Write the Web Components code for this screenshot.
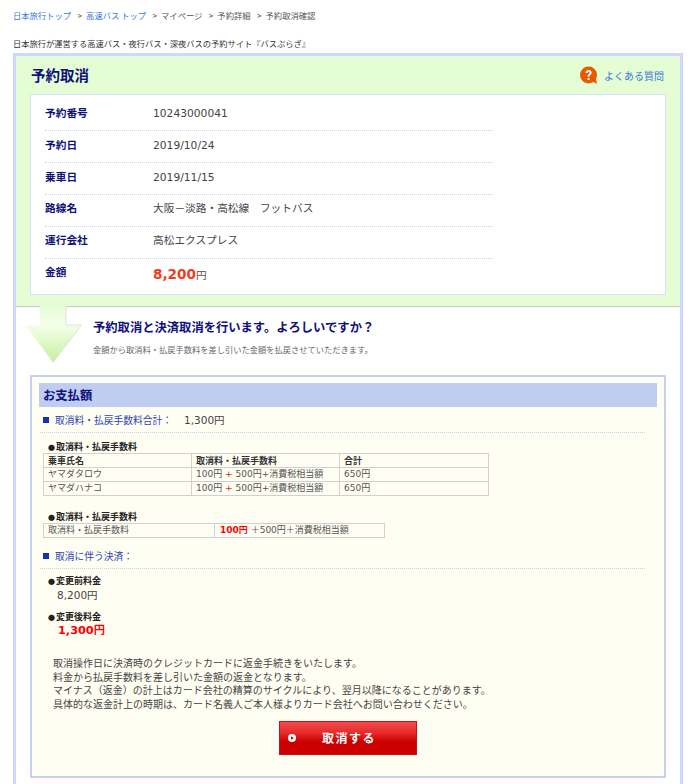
<!DOCTYPE html>
<html lang="ja">
<head>
<meta charset="utf-8">
<title>予約取消</title>
<style>
  html, body { margin: 0; padding: 0; background: #fff; }
  body { width: 700px; height: 784px; overflow: hidden; font-family: "Noto Sans CJK JP", "Liberation Sans", sans-serif; color: #444; }
</style>
</head>
<body>
<crumb-nav>
  <a slot="items">日本旅行トップ</a>
  <a slot="items">高速バス トップ</a>
  <span slot="items">マイページ</span>
  <span slot="items">予約詳細</span>
  <span slot="items">予約取消確認</span>
</crumb-nav>
<site-tagline>日本旅行が運営する高速バス・夜行バス・深夜バスの予約サイト『バスぶらざ』</site-tagline>
<site-frame>
  <summary-panel heading="予約取消">
    <info-row label="予約番号">10243000041</info-row>
    <info-row label="予約日">2019/10/24</info-row>
    <info-row label="乗車日">2019/11/15</info-row>
    <info-row label="路線名" tight>大阪－淡路・高松線　フットバス</info-row>
    <info-row label="運行会社" tight>高松エクスプレス</info-row>
    <info-row label="金額" last tight><price-tag>8,200</price-tag></info-row>
  </summary-panel>
  <cancel-notice heading="予約取消と決済取消を行います。よろしいですか？">金額から取消料・払戻手数料を差し引いた金額を払戻させていただきます。</cancel-notice>
  <refund-box heading="お支払額">
    <sum-line label="取消料・払戻手数料合計：" amount="1,300円"></sum-line>
    <fee-tables></fee-tables>
    <sum-line label="取消に伴う決済：" class="second"></sum-line>
    <fare-item label="変更前料金" amount="8,200円"></fare-item>
    <fare-item label="変更後料金" amount="1,300円" strong></fare-item>
    <refund-note>
      取消操作日に決済時のクレジットカードに返金手続きをいたします。<br>
      料金から払戻手数料を差し引いた金額の返金となります。<br>
      マイナス（返金）の計上はカード会社の精算のサイクルにより、翌月以降になることがあります。<br>
      具体的な返金計上の時期は、カード名義人ご本人様よりカード会社へお問い合わせください。
    </refund-note>
    <cancel-button>取消する</cancel-button>
  </refund-box>
</site-frame>

<script>
(function () {
  const FONT = '"Noto Sans CJK JP", "Liberation Sans", sans-serif';
  const NUM = '"DejaVu Sans", "Noto Sans CJK JP", sans-serif';
  const NAVY = '#10107a';
  const DOT = '<span class="dot">●</span>';
  const DOT_CSS = '.dot { display: inline-block; width: 8px; font-size: 7px; }';

  // small helper: each element gets its markup from a function of itself
  function define(name, render) {
    customElements.define(name, class extends HTMLElement {
      connectedCallback() {
        if (this.shadowRoot) return;
        this.attachShadow({ mode: 'open' }).innerHTML = render(this);
      }
    });
  }
  const attr = (el, key) => el.getAttribute(key) || '';

  define('crumb-nav', () => `
    <style>
      :host { display: block; padding: 8px 0 0 13px; height: 21px; font-size: 8.300px; line-height: 14px; color: #555; }
      .row { display: flex; }
      ::slotted(a) { color: #3a78d8; }
      ::slotted(*) { margin-right: 15px; position: relative; white-space: nowrap; }
      ::slotted(*:not(:last-child))::after { content: ">"; position: absolute; right: -11px; top: 0; color: #555; }
    </style>
    <div class="row"><slot name="items"></slot></div>
  `);

  define('site-tagline', () => `
    <style>
      :host { display: block; padding: 7px 0 3px 13px; height: 14px; font-size: 8.250px; line-height: 14px; color: #333; white-space: nowrap; }
    </style>
    <slot></slot>
  `);

  define('site-frame', () => `
    <style>
      :host { display: block; margin-left: 13px; width: 664px; height: 728px; border: 3px solid #cdd7ff; border-bottom: 0; overflow: hidden; }
    </style>
    <slot></slot>
  `);

  define('summary-panel', (el) => `
    <style>
      :host { display: block; height: 250px; background: #e5fdd5; box-sizing: border-box; padding: 0 14px; box-shadow: 0 1px 1px #ccc; position: relative; }
      .head { display: flex; justify-content: space-between; align-items: center; height: 38px; padding-right: 2px; }
      h1 { margin: 0 0 1px 1px; font-size: 14.500px; line-height: 20px; font-weight: 700; color: ${NAVY}; }
      .faq { display: flex; align-items: center; gap: 6px; font-size: 10px; color: #3a78d8; }
      svg { display: block; }
      .card { height: 201px; box-sizing: border-box; background: #fff; border: 1px solid #d5e2f7; padding: 4px 14px 0; }
    </style>
    <div class="head">
      <h1>${attr(el, 'heading')}</h1>
      <div class="faq">
        <svg width="18" height="19" viewBox="0 0 18 19">
          <path d="M12 15l5 3-1-5z" fill="#e85a00"/>
          <circle cx="8.5" cy="9" r="8.5" fill="#e85a00"/>
          <path d="M5.6 7c0-2 1.3-3 3-3s3 1 3 2.7c0 2.200-2.200 2.200-2.200 4H7.600c0-2.800 2-2.800 2-4 0-.6-.4-1-1-1s-1 .4-1 1.300z" fill="#fff"/>
          <rect x="7.600" y="12" width="1.900" height="2" fill="#fff"/>
        </svg>
        <span>よくある質問</span>
      </div>
    </div>
    <div class="card"><slot></slot></div>
  `);

  define('info-row', (el) => {
    const tight = el.hasAttribute('tight') ? 1 : 0;
    return `
    <style>
      :host { display: flex; align-items: center; width: 448px; height: 32px; box-sizing: border-box; border-bottom: ${el.hasAttribute('last') ? '0' : '1px dotted #c5cff0'}; font-size: 10.700px; }
      b { width: 108px; flex: none; font-size: 10.700px; line-height: 14px; color: ${NAVY}; font-weight: 700; position: relative; top: ${-2 - tight}px; }
      span { color: #444; font-family: ${NUM}; line-height: 14px; position: relative; top: ${-1 - tight}px; white-space: nowrap; }
    </style>
    <b>${attr(el, 'label')}</b><span><slot></slot></span>
  `;
  });

  define('price-tag', () => `
    <style>
      :host { display: inline-block; position: relative; top: 1px; }
      b { font: 700 13.600px "DejaVu Sans", sans-serif; color: #ee3d1c; }
      span { font-size: 10.700px; color: #555; font-family: ${FONT}; }
    </style>
    <b><slot></slot></b><span>円</span>
  `);

  define('cancel-notice', (el) => `
    <style>
      :host { display: block; height: 69px; box-sizing: border-box; padding: 11px 0 0 77px; position: relative; }
      h2 { margin: 0; font-size: 12.300px; line-height: 20px; font-weight: 700; color: ${NAVY}; white-space: nowrap; }
      p { margin: 5px 0 0; font-size: 8.250px; line-height: 14px; color: #666; white-space: nowrap; }
      svg { position: absolute; left: 9px; top: 0; display: block; }
    </style>
    <svg width="58" height="58" viewBox="0 0 58 58">
      <defs>
        <linearGradient id="arr" x1="0" y1="0" x2="0" y2="1">
          <stop offset="0" stop-color="#e5fdd5"/>
          <stop offset=".35" stop-color="#f4fee9"/>
          <stop offset="1" stop-color="#c6f19f"/>
        </linearGradient>
      </defs>
      <path d="M15 0h26v19h15.500L28 56.500 .5 19H15z" fill="url(#arr)"/>
      <path d="M41 0v19h15.500L28 56.500" fill="none" stroke="#dfe3dc" stroke-width="1"/>
    </svg>
    <h2>${attr(el, 'heading')}</h2>
    <p><slot></slot></p>
  `);

  define('refund-box', (el) => `
    <style>
      :host { display: block; margin-left: 14px; width: 636px; height: 403px; box-sizing: border-box; background: #fffef3; border: 2px solid #c5d0f0; padding: 6px 7px 0; }
      h3 { margin: 0; height: 24px; padding-left: 4px; background: #bfcdf0; font-size: 12.300px; line-height: 24px; font-weight: 700; color: ${NAVY}; }
    </style>
    <h3>${attr(el, 'heading')}</h3>
    <slot></slot>
  `);

  define('sum-line', (el) => `
    <style>
      :host { display: flex; align-items: center; width: 605px; margin-left: 1px; height: 26px; box-sizing: border-box; border-bottom: 1px dotted #c5cff0; padding-left: 3px; font-size: 9.750px; color: #2c44b8; }
      :host(.second) { margin-top: 5px; }
      i { width: 6px; height: 6px; background: #1234b0; margin-right: 6px; flex: none; }
      span { margin-left: 12px; font-size: 10.500px; color: #444; font-family: ${NUM}; }
    </style>
    <i></i>${attr(el, 'label')}${attr(el, 'amount') ? `<span>${attr(el, 'amount')}</span>` : ''}
  `);

  define('fee-tables', () => `
    <style>
      :host { display: block; color: #555; }
      h4 { margin: 0 0 0 9px; height: 13px; font-size: 9px; line-height: 14px; font-weight: 700; color: #222; }
      h4.a { padding-top: 7px; }
      h4.b { padding-top: 14px; }
      ${DOT_CSS}
      table { border-collapse: collapse; margin-left: 4px; table-layout: fixed; font-family: ${NUM}; }
      td, th { border: 1px solid #d0d0d0; height: 13px; padding: 0 0 0 4px; line-height: 13px; text-align: left; font-weight: 400; white-space: nowrap; font-size: 9px; overflow: hidden; }
      tr.short td { height: 12px; }
      th { font-weight: 700; color: #333; font-family: ${FONT}; font-size: 9px; }
      .t1 { width: 445px; }
      .t2 { width: 341px; }
      em { font-style: normal; font-weight: 700; color: #f00; line-height: 10px; }
      .pl { color: #c03030; }
    </style>
    <h4 class="a">${DOT}取消料・払戻手数料</h4>
    <table class="t1">
      <colgroup><col style="width:148px"><col style="width:148px"><col style="width:149px"></colgroup>
      <tr><th>乗車氏名</th><th>取消料・払戻手数料</th><th>合計</th></tr>
      <tr class="short"><td>ヤマダタロウ</td><td>100円 <span class="pl">+</span> 500円+消費税相当額</td><td>650円</td></tr>
      <tr><td>ヤマダハナコ</td><td>100円 <span class="pl">+</span> 500円+消費税相当額</td><td>650円</td></tr>
    </table>
    <h4 class="b">${DOT}取消料・払戻手数料</h4>
    <table class="t2">
      <colgroup><col style="width:171px"><col style="width:170px"></colgroup>
      <tr><td>取消料・払戻手数料</td><td style="padding-left:5px"><em>100円</em> ＋500円＋消費税相当額</td></tr>
    </table>
  `);

  define('fare-item', (el) => `
    <style>
      :host { display: block; margin: 5px 0 0 9px; font-size: 9px; }
      b { display: block; height: 14px; line-height: 14px; font-weight: 700; color: #222; }
      ${DOT_CSS}
      span.val { display: block; height: 15px; line-height: 15px; padding-left: 9px; font-size: 10.500px; color: #444; font-family: ${NUM}; }
      span.strong { height: 14px; line-height: 14px; font-size: 11.300px; font-weight: 700; color: #f00; padding-left: 10px; }
      :host([strong]) { margin-top: 7px; }
    </style>
    <b>${DOT}${attr(el, 'label')}</b>
    <span class="val ${el.hasAttribute('strong') ? 'strong' : ''}">${attr(el, 'amount')}</span>
  `);

  define('refund-note', () => `
    <style>
      :host { display: block; margin: 18px 0 0 14px; font-size: 10px; line-height: 13.700px; color: #444; white-space: nowrap; }
    </style>
    <slot></slot>
  `);

  define('cancel-button', () => `
    <style>
      :host { display: flex; align-items: center; margin: 10px 0 0 240px; width: 138px; height: 34px; box-sizing: border-box; border: 1px solid #c4141f; background: linear-gradient(#f24a4a 0, #e52a2a 35%, #cc0000 60%, #cc0000 100%); color: #fff; font-size: 12px; font-weight: 700; letter-spacing: 1.500px; position: relative; }
      svg { position: absolute; left: 8px; top: 12px; display: block; }
      span { margin-left: 42px; white-space: nowrap; }
    </style>
    <svg width="8" height="8" viewBox="0 0 8 8"><circle cx="4" cy="4" r="4" fill="#fff"/><path d="M3 2.200L6 4 3 5.800z" fill="#c00"/></svg>
    <span><slot></slot></span>
  `);
})();
</script>
</body>
</html>
